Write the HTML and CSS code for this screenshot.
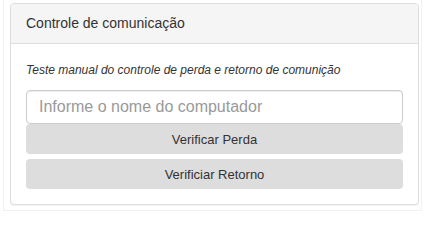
FILE: index.html
```html
<!DOCTYPE html>
<html lang="pt-BR">
<head>
<meta charset="utf-8">
<title>Controle de comunicação</title>
<link rel="stylesheet" href="styles.css">
</head>
<body>
<div class="frame">
  <div class="panel">
    <div class="panel-heading">Controle de comunicação</div>
    <div class="panel-body">
      <p class="hint">Teste manual do controle de perda e retorno de comunição</p>
      <input class="field" type="text" placeholder="Informe o nome do computador">
      <button class="btn" type="button">Verificar Perda</button>
      <button class="btn btn-second" type="button">Verificiar Retorno</button>
    </div>
  </div>
</div>
</body>
</html>
```

FILE: styles.css
```css
html, body {
  margin: 0;
  padding: 0;
  background: #fff;
}
body {
  font-family: "Liberation Sans", Arial, sans-serif;
  color: #333;
}
.frame {
  width: 419px;
  margin-left: 3px;
  box-sizing: border-box;
  border-left: 1px solid #f1f1f1;
  border-right: 1px solid #f1f1f1;
  border-bottom: 1px solid #f1f1f1;
  padding: 3px 2px 5px 6px;
}
.panel {
  width: 409px;
  box-sizing: border-box;
  border: 1px solid #ddd;
  border-radius: 4px;
  background: #fff;
  box-shadow: 0 1px 1px rgba(0,0,0,0.05);
}
.panel-heading {
  background: #f5f5f5;
  border-bottom: 1px solid #ddd;
  border-radius: 3px 3px 0 0;
  padding: 10px 15px;
  font-size: 14px;
  line-height: 19px;
  color: #333;
}
.panel-body {
  padding: 18px 15px 15px 15px;
  display: flex;
  flex-direction: column;
}
.hint {
  margin: 0 0 11px 0;
  font-size: 12px;
  line-height: 17px;
  font-style: italic;
  color: #333;
}
.field {
  display: block;
  box-sizing: border-box;
  width: 100%;
  height: 34px;
  margin: 0;
  padding: 6px 12px;
  border: 1px solid #ccc;
  border-radius: 4px;
  font-family: "Liberation Sans", Arial, sans-serif;
  font-size: 16px;
  color: #555;
  background: #fff;
  box-shadow: inset 0 1px 1px rgba(0,0,0,0.075);
  outline: none;
}
.field::placeholder {
  color: #999;
}
.btn {
  display: block;
  box-sizing: border-box;
  width: 100%;
  height: 30px;
  margin: 0;
  padding: 0;
  border: none;
  border-radius: 4px;
  background: #ddd;
  font-family: "Liberation Sans", Arial, sans-serif;
  font-size: 13px;
  color: #333;
  text-align: center;
  cursor: pointer;
}
.btn-second {
  margin-top: 5px;
}
```
